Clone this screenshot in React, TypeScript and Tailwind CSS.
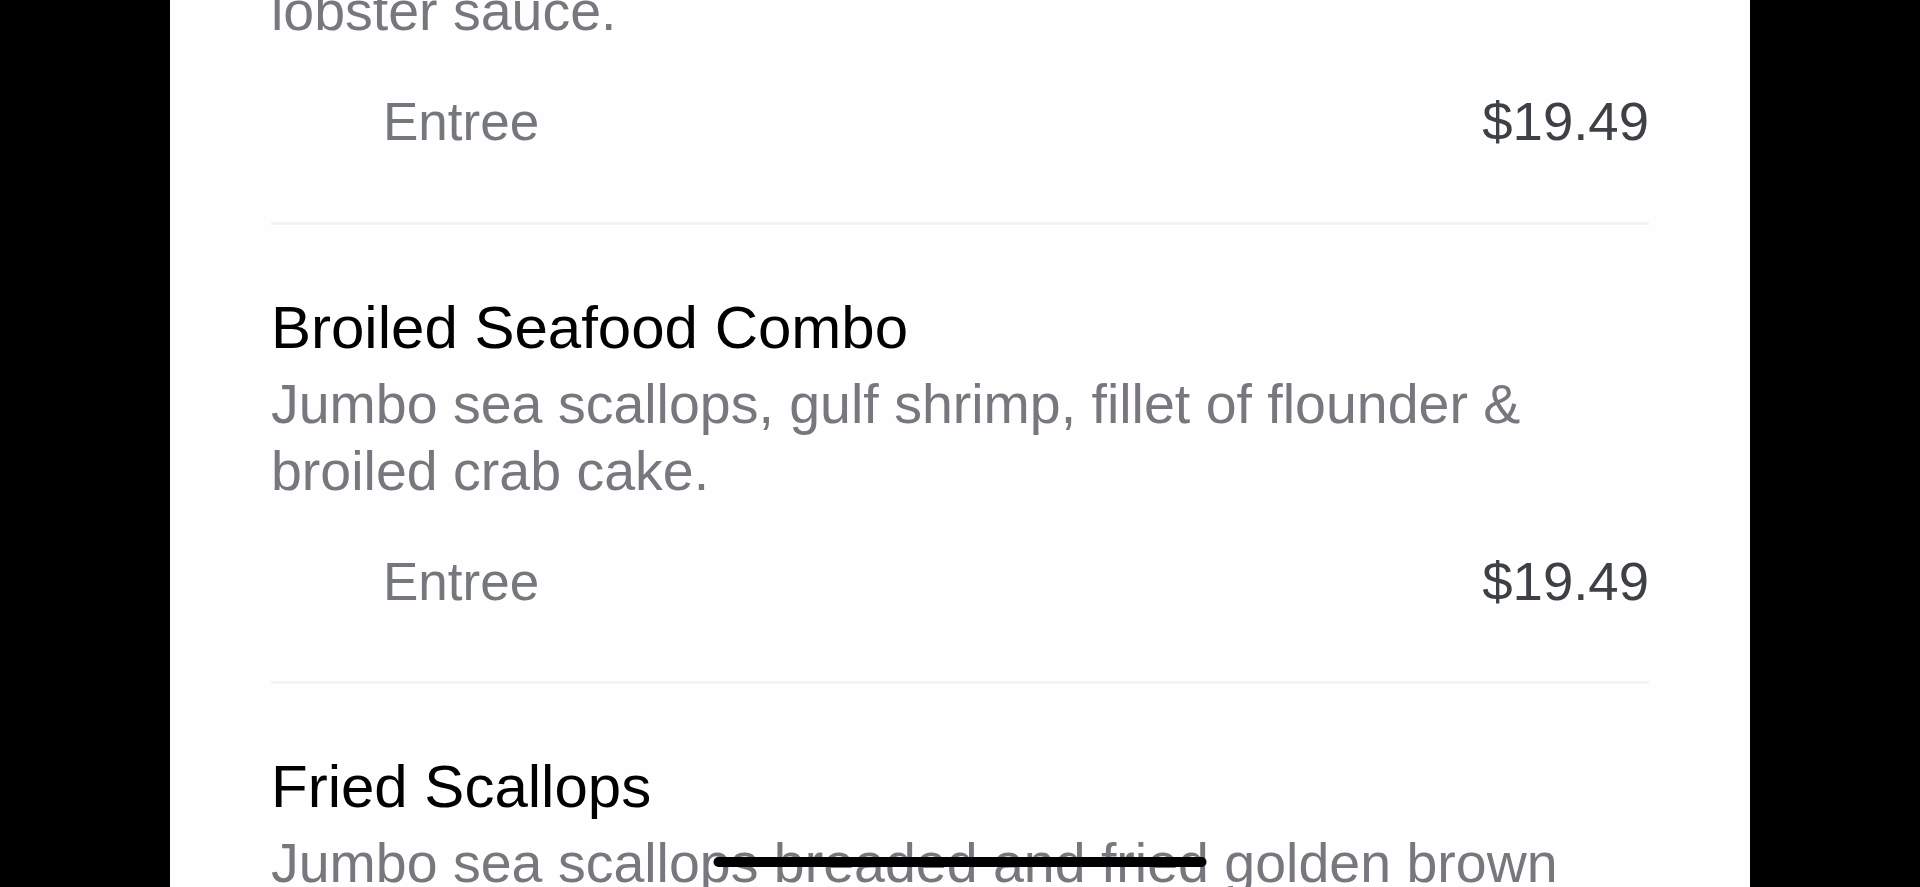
const items = [
  {
    name: "Broiled Seafood Combo",
    description:
      "Jumbo sea scallops, gulf shrimp, fillet of flounder & broiled crab cake.",
    kind: "Entree",
    price: "$19.49",
  },
  {
    name: "Fried Scallops",
    description:
      "Jumbo sea scallops breaded and fried golden brown served with tartar sauce.",
    kind: "Entree",
    price: "$19.49",
  },
];

const font = "font-['Liberation_Sans',Arial,sans-serif]";

const PriceRow = ({kind, price}: {kind: string; price: string}) => (
  <div className="mt-[47px] flex items-center justify-between pl-[112px] text-[53px] leading-[60px]">
    <span className="text-[#74777c]">{kind}</span>
    <span className="text-[54.5px] text-[#3d4146]">{price}</span>
  </div>
);

const App = () => {
  return (
    <div className={`h-[887px] w-full overflow-hidden bg-black ${font}`}>
      <div className="relative mx-auto h-full w-[1580px] overflow-hidden bg-[#fefefe] px-[101px]">
        {/* tail of the previous item */}
        <div>
          <p className="-mt-[22px] text-[55.5px] leading-[67px] text-[#76787d]">
            lobster sauce.
          </p>
          <PriceRow kind="Entree" price="$19.49" />
          <div className="mt-[70px] h-[3px] bg-[#f3f3f3]" />
        </div>

        {items.map((item) => (
          <div key={item.name}>
            <h3 className="pt-[68px] text-[60px] leading-[70px] text-black">
              {item.name}
            </h3>
            <p className="mt-2 text-[55.5px] leading-[67px] text-[#76787d]">
              {item.description}
            </p>
            <PriceRow kind={item.kind} price={item.price} />
            <div className="mt-[69px] h-[3px] bg-[#f3f3f3]" />
          </div>
        ))}

        {/* home indicator */}
        <div className="absolute bottom-[20px] left-1/2 h-[10px] w-[493px] -translate-x-1/2 rounded-full bg-black" />
      </div>
    </div>
  );
};

export default App;
